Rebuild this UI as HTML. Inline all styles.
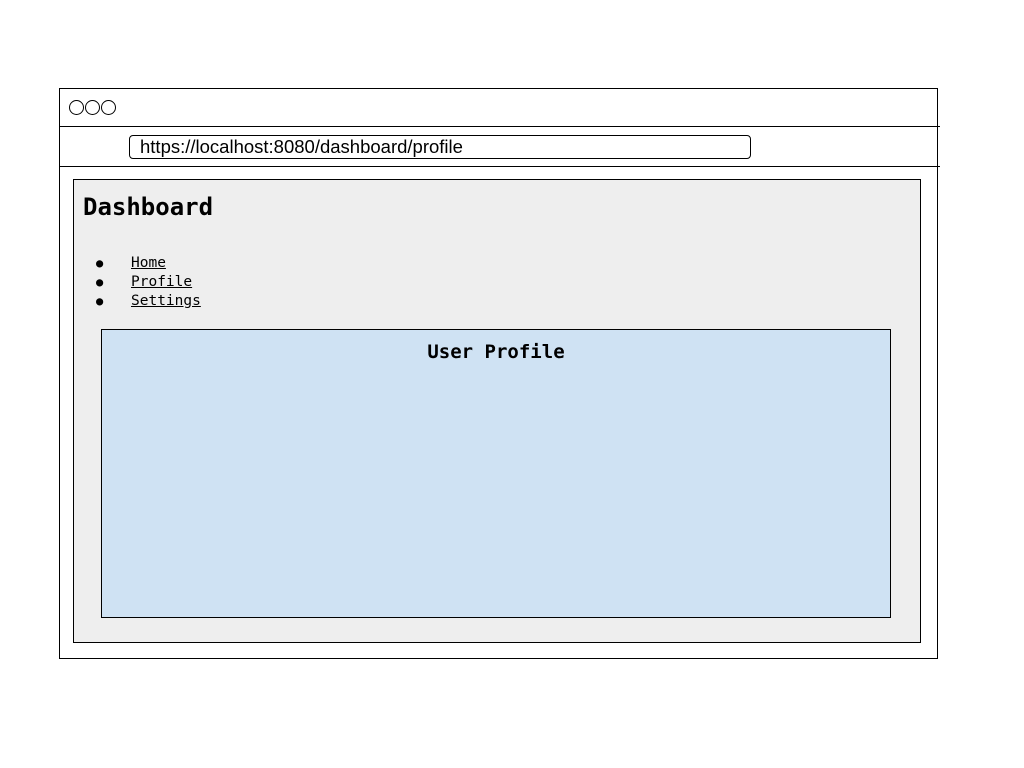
<!DOCTYPE html>
<html><head><style>
body{margin:0;width:1024px;height:768px;background:#fff;position:relative;font-family:"DejaVu Sans Mono","Liberation Mono",monospace;}
div{position:absolute;box-sizing:border-box;}
.c{width:15px;height:15px;border:1px solid #000;border-radius:50%;top:100px;}
a{color:#000;text-decoration:underline;}
.b{font-size:12px;display:inline-block;width:35px;}
</style></head><body>
<div style="left:59px;top:88px;width:879px;height:571px;border:1px solid #000;"></div>
<div class="c" style="left:69px"></div><div class="c" style="left:85px"></div><div class="c" style="left:101px"></div>
<div style="left:59px;top:126px;width:881px;height:1px;background:#000"></div>
<div style="left:59px;top:166px;width:881px;height:1px;background:#000"></div>
<div style="left:129px;top:135px;width:622px;height:24px;border:1px solid #000;border-radius:4px;font-family:'Liberation Sans',sans-serif;font-size:18.5px;line-height:22px;padding-left:10px;">https://localhost:8080/dashboard/profile</div>
<div style="left:73px;top:179px;width:848px;height:464px;border:1px solid #000;background:#eee;"></div>
<div style="left:83px;top:191px;font-size:24px;font-weight:bold;line-height:32px;">Dashboard</div>
<div style="left:96px;top:254px;font-size:14.5px;line-height:19px;">
<div style="position:static"><span class="b">●</span><a>Home</a></div>
<div style="position:static"><span class="b">●</span><a>Profile</a></div>
<div style="position:static"><span class="b">●</span><a>Settings</a></div>
</div>
<div style="left:101px;top:329px;width:790px;height:289px;border:1px solid #000;background:#cfe2f3;text-align:center;font-size:19px;font-weight:bold;padding-top:11px;">User Profile</div>
</body></html>
